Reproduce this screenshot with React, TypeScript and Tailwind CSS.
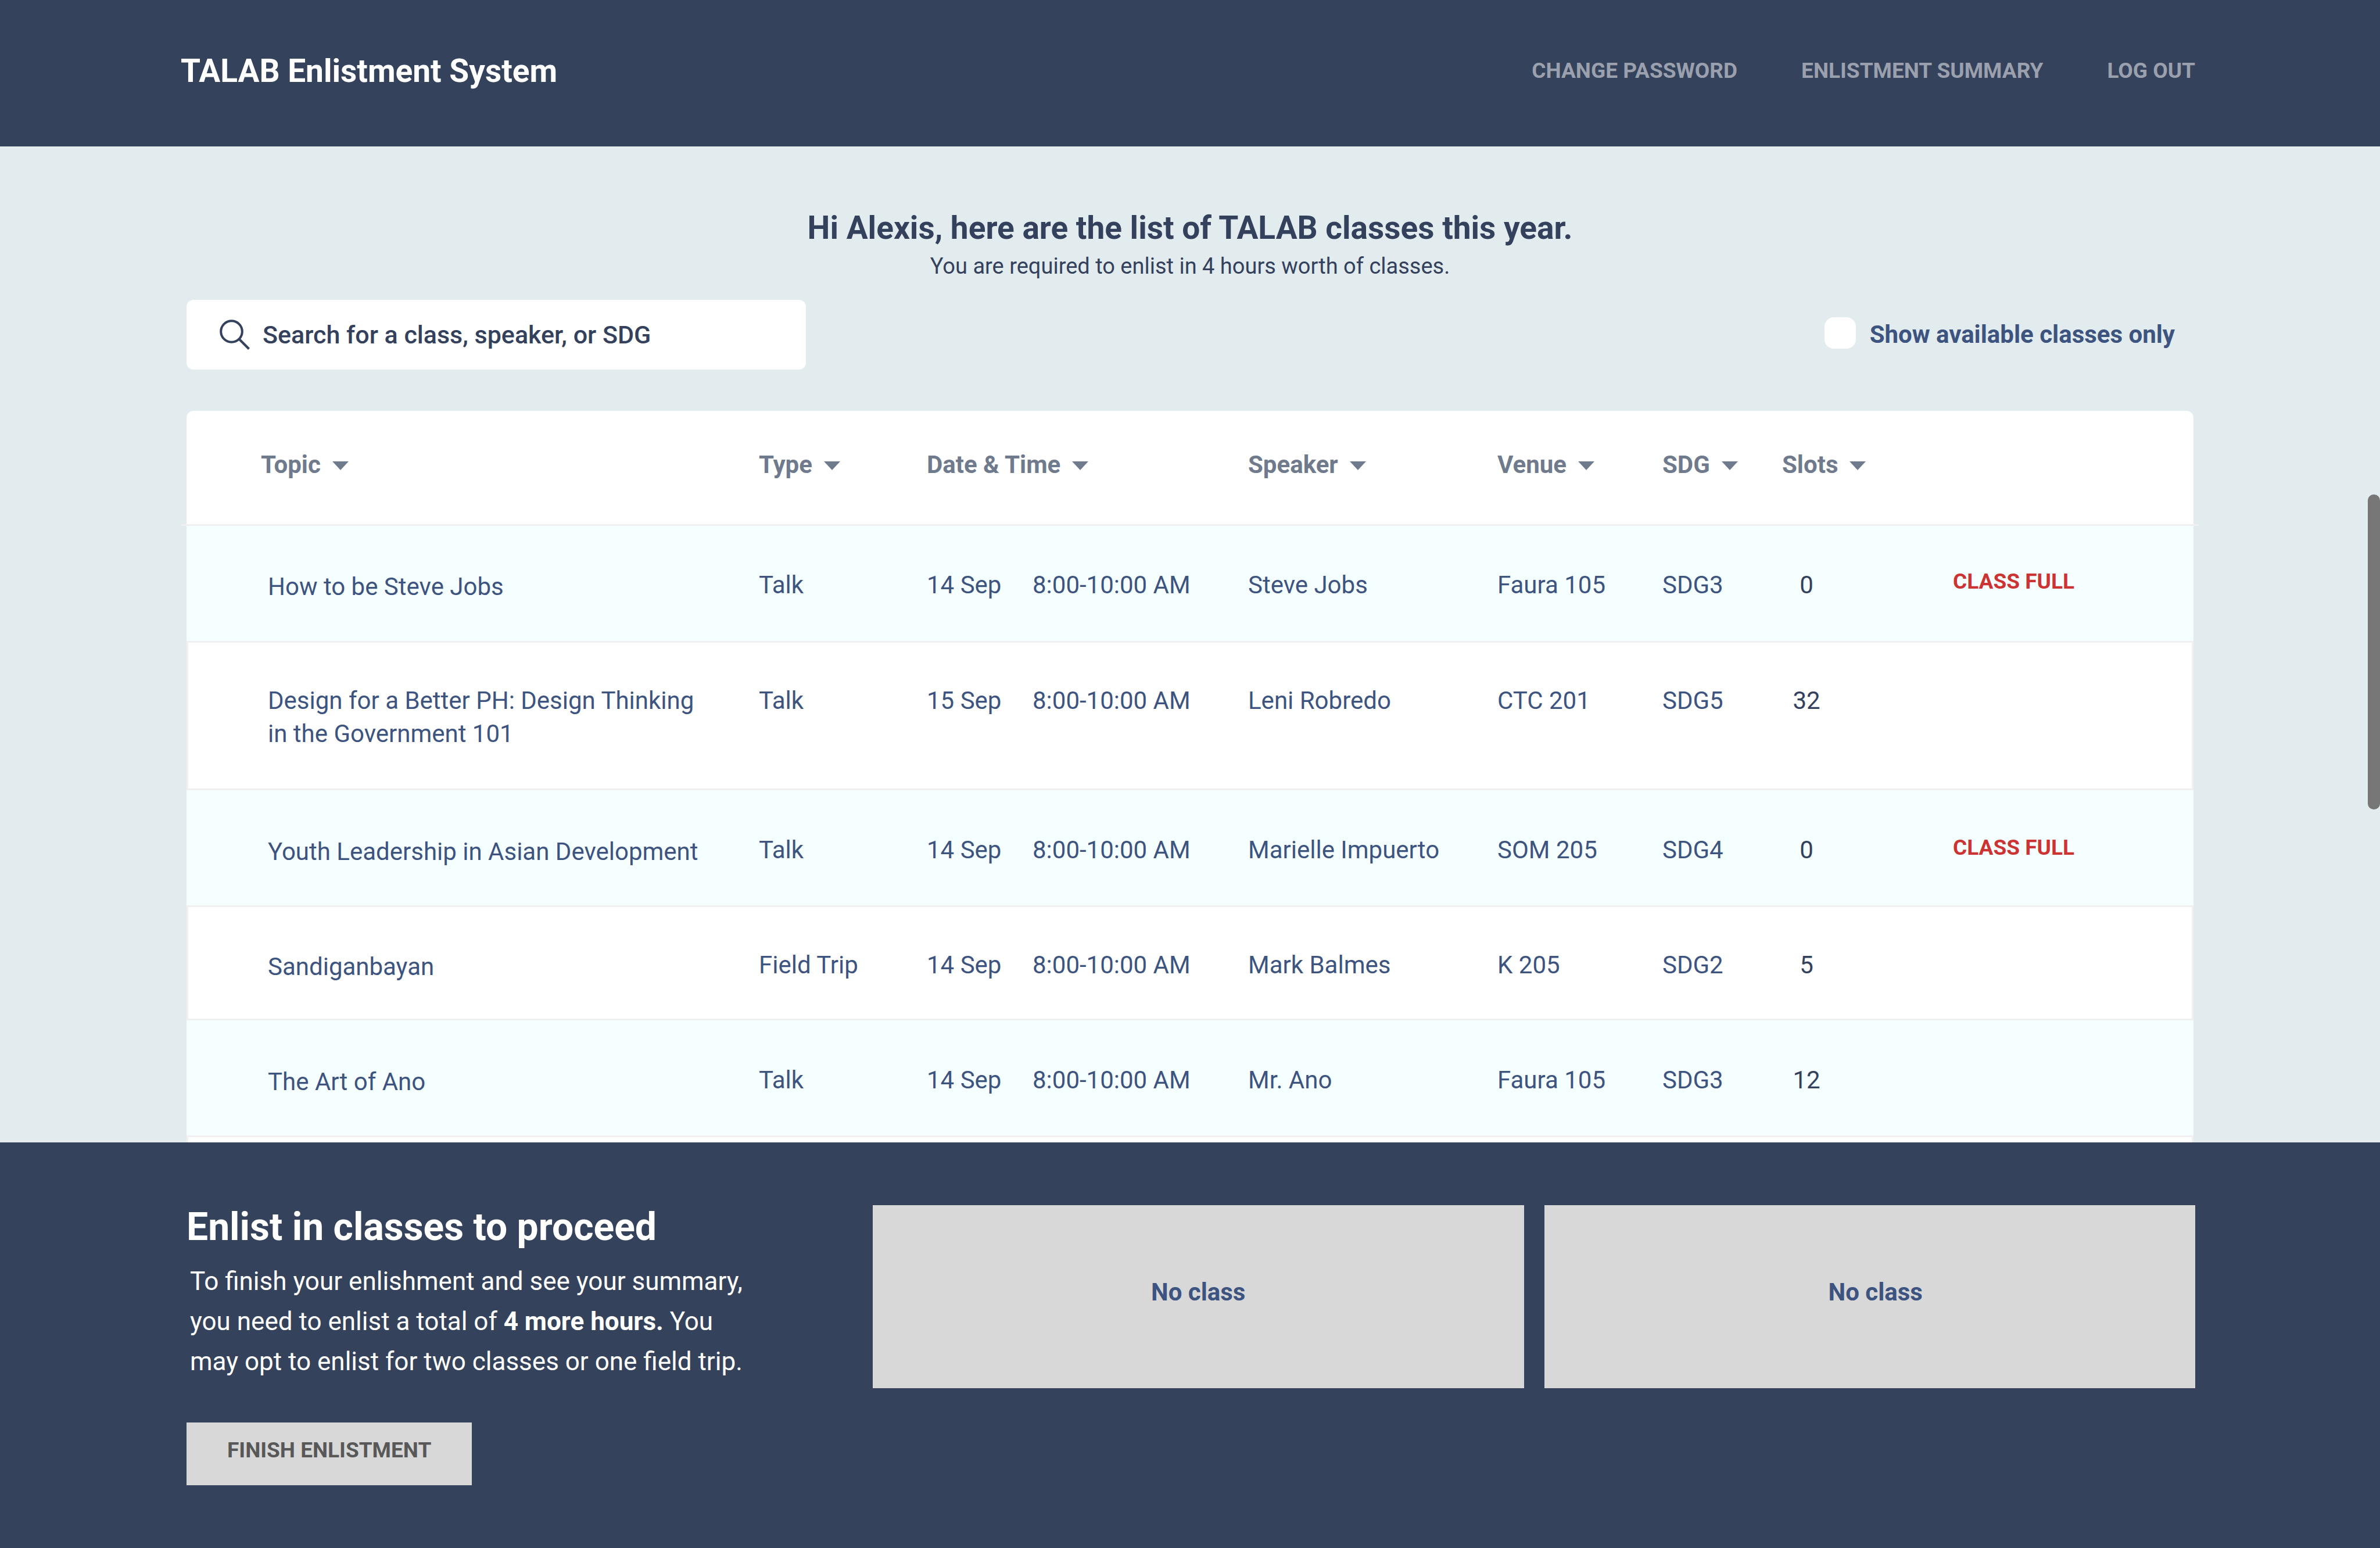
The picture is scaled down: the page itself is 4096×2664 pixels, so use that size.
import React from "react";

const columns = [
  { label: "Topic", width: "", pad: "pl-[128px]" },
  { label: "Type", width: "w-[289px]", pad: "" },
  { label: "Date & Time", width: "w-[553px]", pad: "" },
  { label: "Speaker", width: "w-[429px]", pad: "" },
  { label: "Venue", width: "w-[284px]", pad: "" },
  { label: "SDG", width: "w-[206px]", pad: "" },
  { label: "Slots", width: "w-[294px]", pad: "" },
];

type Row = {
  topic: string;
  type: string;
  date: string;
  speaker: string;
  venue: string;
  sdg: string;
  slots: number;
  height: string;
  pad: string;
  topicPad: string;
  statusPad: string;
};

const rows: Row[] = [
  { topic: "How to be Steve Jobs", type: "Talk", date: "14 Sep", speaker: "Steve Jobs", venue: "Faura 105", sdg: "SDG3", slots: 0, height: "h-[201px]", pad: "pt-[73px]", topicPad: "pt-[76px]", statusPad: "pt-[67px]" },
  { topic: "Design for a Better PH: Design Thinking in the Government 101", type: "Talk", date: "15 Sep", speaker: "Leni Robredo", venue: "CTC 201", sdg: "SDG5", slots: 32, height: "h-[254px]", pad: "pt-[71px]", topicPad: "pt-[71px]", statusPad: "pt-[67px]" },
  { topic: "Youth Leadership in Asian Development", type: "Talk", date: "14 Sep", speaker: "Marielle Impuerto", venue: "SOM 205", sdg: "SDG4", slots: 0, height: "h-[201px]", pad: "pt-[74px]", topicPad: "pt-[77px]", statusPad: "pt-[70px]" },
  { topic: "Sandiganbayan", type: "Field Trip", date: "14 Sep", speaker: "Mark Balmes", venue: "K 205", sdg: "SDG2", slots: 5, height: "h-[195px]", pad: "pt-[71px]", topicPad: "pt-[74px]", statusPad: "pt-[67px]" },
  { topic: "The Art of Ano", type: "Talk", date: "14 Sep", speaker: "Mr. Ano", venue: "Faura 105", sdg: "SDG3", slots: 12, height: "h-[201px]", pad: "pt-[74px]", topicPad: "pt-[77px]", statusPad: "pt-[67px]" },
];

function Caret() {
  return (
    <svg width="28" height="18" viewBox="0 0 28 18" fill="#6f7b8d" aria-hidden="true">
      <path d="M0 3h28L14 18z" />
    </svg>
  );
}

function SearchIcon() {
  return (
    <svg width="52" height="52" viewBox="0 0 52 52" fill="none" stroke="#34415c" strokeWidth="4" aria-hidden="true">
      <circle cx="20.500" cy="20.500" r="18.300" />
      <path d="M33.500 33.500L50.500 50.500" />
    </svg>
  );
}

function ClassRow({ row, index }: { row: Row; index: number }) {
  const shaded = index % 2 === 0;
  const base = "border-t-3 border-[#f0f0f0] p-0 align-top leading-[57px]";
  const cell = `${base} ${row.pad}`;
  // The rule under the table head runs slightly past both edges of the card.
  const ruleStart = index === 0 ? "relative before:absolute before:-top-[3px] before:-left-[9px] before:h-[3px] before:w-[9px] before:bg-[#f0f0f0]" : "";
  const ruleEnd = index === 0 ? "relative after:absolute after:-top-[3px] after:-right-[9px] after:h-[3px] after:w-[9px] after:bg-[#f0f0f0]" : "";
  return (
    <tr className={`${row.height} ${shaded ? "bg-[#f6ffff]" : "bg-white"}`}>
      <td className={`${base} ${row.topicPad} ${ruleStart} ${shaded ? "pl-[140px]" : "border-l-3 pl-[137px]"} pr-[80px]`}>{row.topic}</td>
      <td className={cell}>{row.type}</td>
      <td className={cell}>
        <div className="flex">
          <span className="w-[182px]">{row.date}</span>
          <span>8:00-10:00 AM</span>
        </div>
      </td>
      <td className={cell}>{row.speaker}</td>
      <td className={cell}>{row.venue}</td>
      <td className={cell}>{row.sdg}</td>
      <td className={`${cell} text-[#34415c]`}>
        <div className="w-[84px] text-center">{row.slots}</div>
      </td>
      <td className={`${base} ${row.statusPad} ${ruleEnd} text-[37px] font-bold text-[#cc3333] ${shaded ? "" : "border-r-3"}`}>
        {row.slots === 0 ? "CLASS FULL" : null}
      </td>
    </tr>
  );
}

export default function App() {
  return (
    <div className="relative flex h-screen flex-col overflow-hidden bg-[#e2ebee] font-['Roboto',sans-serif] text-[42px] text-[#3d5480]">
      <header className="flex items-center justify-between bg-[#35425c] pt-[86px] pr-[318px] pb-[94px] pl-[311px]">
        <h1 className="text-[55px] leading-[72px] font-bold text-white">TALAB Enlistment System</h1>
        <nav className="flex gap-[110px] text-[37px] leading-[72px] font-bold text-[#9aa0ad]">
          <a href="#password">CHANGE PASSWORD</a>
          <a href="#summary">ENLISTMENT SUMMARY</a>
          <a href="#logout">LOG OUT</a>
        </nav>
      </header>

      <main className="min-h-0 flex-1 overflow-hidden px-[321px] pt-[104px]">
        <div className="text-center text-[#34415c]">
          <h2 className="text-[55px] leading-[72px] font-bold">Hi Alexis, here are the list of TALAB classes this year.</h2>
          <p className="text-[38px] leading-[60px]">You are required to enlist in 4 hours worth of classes.</p>
        </div>

        <div className="mt-7 flex items-center justify-between">
          <label className="flex h-[120px] w-[1066px] items-center gap-[22px] rounded-[12px] bg-white pr-6 pl-[57px]">
            <SearchIcon />
            <input
              type="search"
              aria-label="Search classes"
              placeholder="Search for a class, speaker, or SDG"
              className="min-w-0 flex-1 text-[43px] leading-[60px] font-medium outline-none placeholder:text-[#34415c] placeholder:opacity-100"
            />
          </label>
          <label className="flex items-start gap-6 pr-8 leading-[60px] font-bold">
            <input type="checkbox" className="size-[54px] appearance-none rounded-[16px] bg-white checked:bg-[#3d5480]" />
            Show available classes only
          </label>
        </div>

        <table className="mt-[71px] w-full table-fixed border-separate border-spacing-0 text-left">
          <thead>
            <tr className="text-[#6f7b8d]">
              {columns.map((c) => (
                <th key={c.label} className={`bg-white p-0 pt-[63px] pb-[72px] font-bold first:rounded-tl-[12px] ${c.width} ${c.pad}`}>
                  <button type="button" className="flex items-center gap-5 leading-[60px]">
                    {c.label}
                    <Caret />
                  </button>
                </th>
              ))}
              <th className="w-[414px] rounded-tr-[12px] bg-white p-0" aria-label="Status" />
            </tr>
          </thead>
          <tbody>
            {rows.map((row, i) => (
              <ClassRow key={row.topic} row={row} index={i} />
            ))}
            <tr className="h-[195px] bg-white">
              <td colSpan={8} className="border-x-3 border-t-3 border-[#f0f0f0]" />
            </tr>
          </tbody>
        </table>
      </main>

      <footer className="flex items-start bg-[#35425c] pt-[108px] pr-[318px] pb-[108px] pl-[321px] text-white">
        <div className="w-[1181px] shrink-0">
          <h2 className="text-[66px] leading-[76px] font-bold">Enlist in classes to proceed</h2>
          <p className="mt-[21px] pl-1.5 text-[44px] leading-[69px]">
            To finish your enlishment and see your summary,
            <br />
            you need to enlist a total of <strong className="font-bold">4 more hours.</strong> You
            <br />
            may opt to enlist for two classes or one field trip.
          </p>
          <button type="button" className="mt-[70px] block bg-[#d8d8d8] px-[70px] pt-[18px] pb-[30px] text-[37px] leading-[60px] font-bold text-[#585858]">
            FINISH ENLISTMENT
          </button>
        </div>
        <div className="grid flex-1 grid-cols-2 gap-[35px] text-center leading-[60px] font-bold text-[#3d5480]">
          <div className="bg-[#d8d8d8] pt-[120px] pb-[135px]">No class</div>
          <div className="bg-[#d8d8d8] pt-[120px] pb-[135px] pl-5">No class</div>
        </div>
      </footer>

      <div className="absolute top-[851px] right-0 h-[542px] w-[21px] rounded-[10px] bg-[#777777]" />
    </div>
  );
}
